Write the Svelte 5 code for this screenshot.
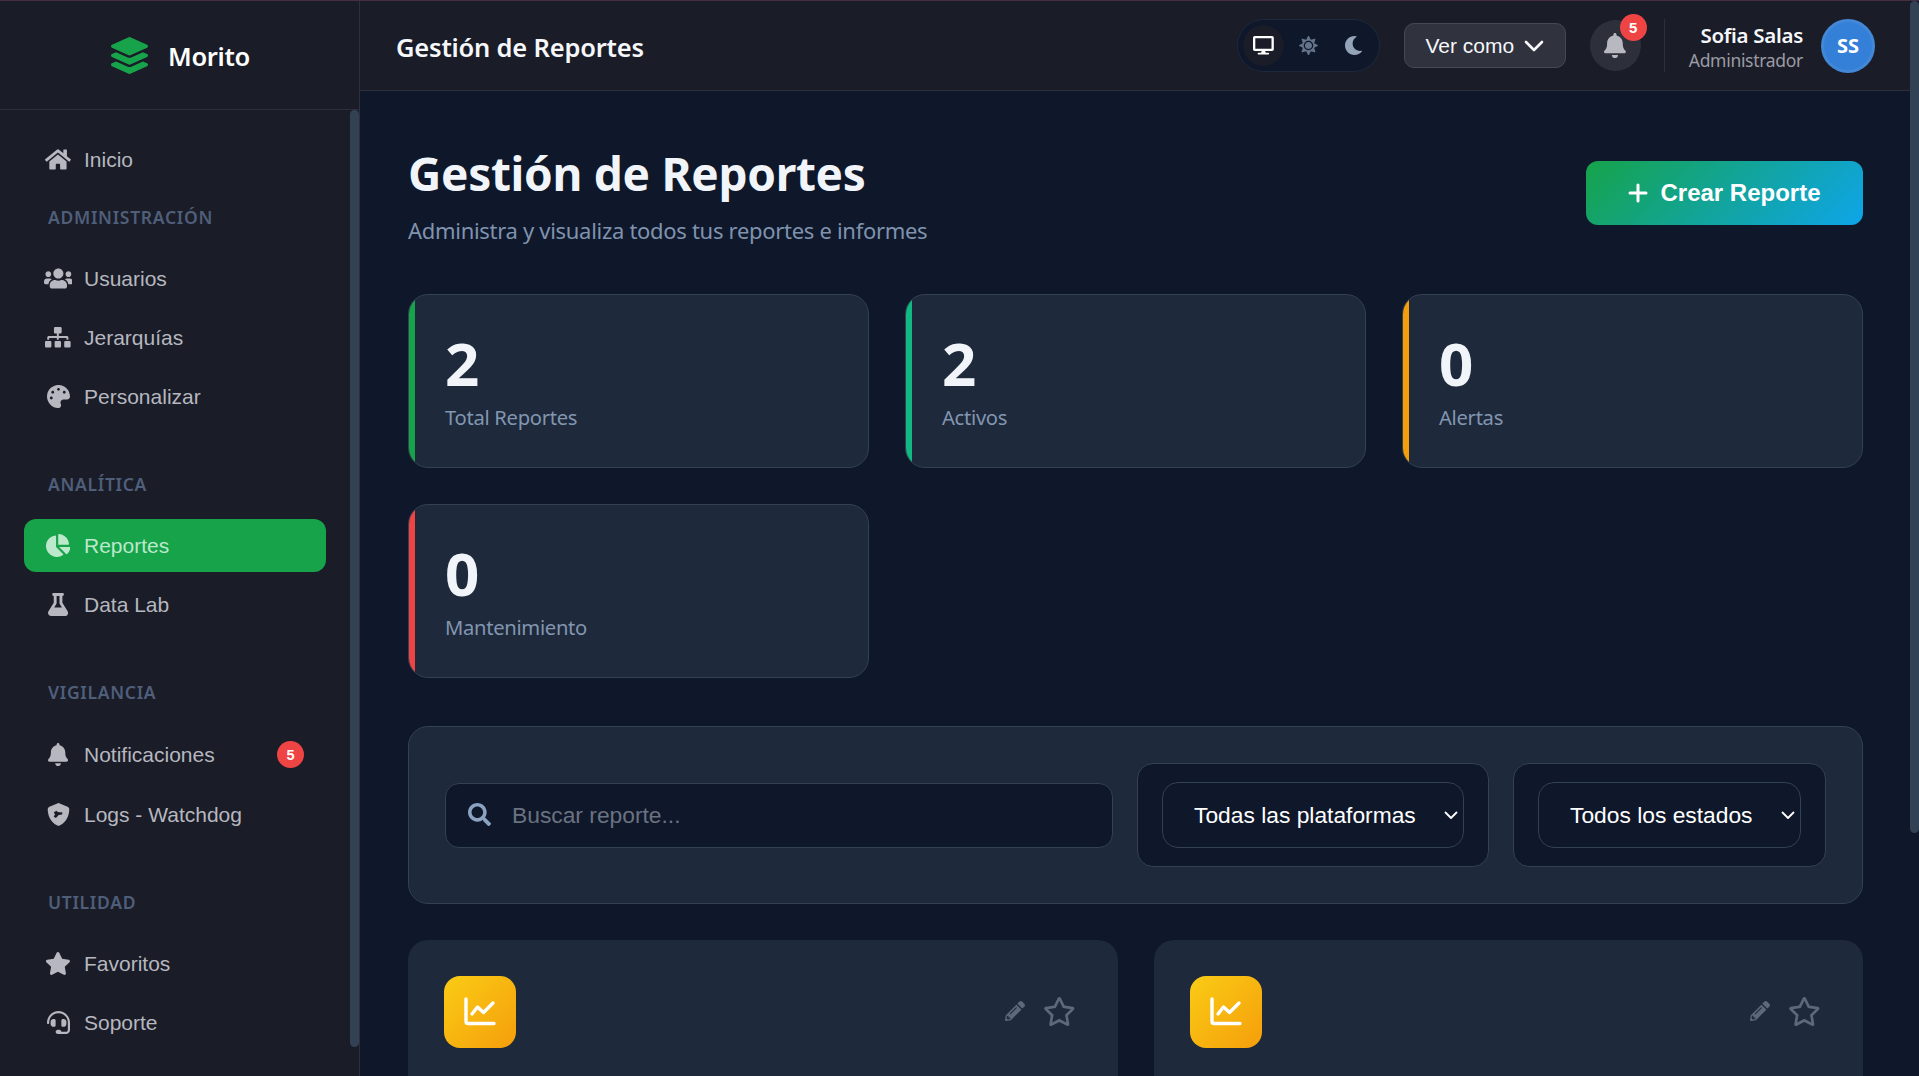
<script>
  const icons = {
    home: [576, 'M280.37 148.26L96 300.11V464a16 16 0 0 0 16 16l112.06-.29a16 16 0 0 0 15.92-16V368a16 16 0 0 1 16-16h64a16 16 0 0 1 16 16v95.64a16 16 0 0 0 16 16.05L464 480a16 16 0 0 0 16-16V300L295.67 148.26a12.19 12.19 0 0 0-15.3 0zM571.6 251.47L488 182.56V44.05a12 12 0 0 0-12-12h-56a12 12 0 0 0-12 12v72.61L318.47 43a48 48 0 0 0-61 0L4.34 251.47a12 12 0 0 0-1.6 16.9l25.5 31A12 12 0 0 0 45.15 301l235.22-193.74a12.19 12.19 0 0 1 15.3 0L530.9 301a12 12 0 0 0 16.9-1.6l25.5-31a12 12 0 0 0-1.7-16.93z'],
    users: [640, 'M96 224c35.3 0 64-28.7 64-64s-28.7-64-64-64-64 28.7-64 64 28.7 64 64 64zm448 0c35.3 0 64-28.7 64-64s-28.7-64-64-64-64 28.7-64 64 28.7 64 64 64zm32 32h-64c-17.6 0-33.5 7.1-45.1 18.6 40.3 22.1 68.9 62 75.1 109.4h66c17.7 0 32-14.3 32-32v-32c0-35.3-28.7-64-64-64zm-256 0c61.9 0 112-50.1 112-112S381.9 32 320 32 208 82.1 208 144s50.1 112 112 112zm76.8 32h-8.3c-20.8 10-43.9 16-68.5 16s-47.6-6-68.5-16h-8.3C179.6 288 128 339.6 128 403.2V432c0 26.5 21.5 48 48 48h288c26.5 0 48-21.5 48-48v-28.8c0-63.6-51.6-115.2-115.2-115.2zm-223.7-13.4C161.5 263.1 145.6 256 128 256H64c-35.3 0-64 28.7-64 64v32c0 17.7 14.3 32 32 32h65.9c6.3-47.4 34.9-87.3 75.2-109.4z'],
    sitemap: [640, 'M128 352H32c-17.67 0-32 14.33-32 32v96c0 17.67 14.33 32 32 32h96c17.67 0 32-14.33 32-32v-96c0-17.67-14.33-32-32-32zm-24-80h192v48h48v-48h192v48h48v-57.59c0-21.17-17.23-38.41-38.41-38.41H344v-64h40c17.67 0 32-14.33 32-32V32c0-17.67-14.33-32-32-32H256c-17.67 0-32 14.33-32 32v96c0 17.67 14.33 32 32 32h40v64H94.41C73.23 224 56 241.23 56 262.41V320h48v-48zm264 80h-96c-17.67 0-32 14.33-32 32v96c0 17.67 14.33 32 32 32h96c17.67 0 32-14.33 32-32v-96c0-17.67-14.33-32-32-32zm240 0h-96c-17.67 0-32 14.33-32 32v96c0 17.67 14.33 32 32 32h96c17.67 0 32-14.33 32-32v-96c0-17.67-14.33-32-32-32z'],
    palette: [512, 'M204.3 5C104.9 24.4 24.8 104.3 5.2 203.4c-37 187 131.7 326.4 258.8 306.7 41.2-6.4 61.4-54.6 42.5-91.7-23.1-45.4 9.9-98.4 60.9-98.4h79.7c35.8 0 64.8-29.6 64.9-65.3C511.5 97.1 368.1-26.9 204.3 5zM96 320c-17.7 0-32-14.3-32-32s14.3-32 32-32 32 14.3 32 32-14.3 32-32 32zm32-128c-17.7 0-32-14.3-32-32s14.3-32 32-32 32 14.3 32 32-14.3 32-32 32zm128-64c-17.7 0-32-14.3-32-32s14.3-32 32-32 32 14.3 32 32-14.3 32-32 32zm128 64c-17.7 0-32-14.3-32-32s14.3-32 32-32 32 14.3 32 32-14.3 32-32 32z'],
    pie: [544, 'M527.79 288H290.5l158.03 158.03c6.04 6.04 15.98 6.53 22.19.68 38.7-36.46 65.32-85.61 73.13-140.86 1.34-9.46-6.51-17.85-16.06-17.85zm-15.83-64.8C503.72 103.74 408.26 8.28 288.8.04 279.68-.59 272 7.1 272 16.24V240h223.77c9.14 0 16.82-7.68 16.19-16.8zM224 288V50.71c0-9.55-8.39-17.4-17.84-16.06C86.99 51.49-4.1 155.6.14 280.37 4.5 408.51 114.83 513.59 243.03 511.98c50.4-.63 96.97-16.87 135.26-44.03 7.9-5.6 8.42-17.23 1.57-24.08L224 288z'],
    flask: [448, 'M437.2 403.5L320 215V64h8c13.3 0 24-10.7 24-24V24c0-13.3-10.7-24-24-24H120c-13.3 0-24 10.7-24 24v16c0 13.3 10.7 24 24 24h8v151L10.8 403.5C-18.5 450.6 15.3 512 70.9 512h306.2c55.7 0 89.4-61.5 60.1-108.5zM137.9 320l48.2-77.6c3.7-5.2 5.8-11.6 5.8-18.4V64h64v160c0 6.9 2.2 13.2 5.8 18.4l48.2 77.6h-172z'],
    bell: [448, 'M224 512c35.32 0 63.97-28.65 63.97-64H160.03c0 35.35 28.65 64 63.97 64zm215.39-149.71c-19.32-20.76-55.47-51.99-55.47-154.29 0-77.7-54.48-139.9-127.94-155.16V32c0-17.67-14.32-32-31.98-32s-31.98 14.33-31.98 32v20.84C118.56 68.1 64.08 130.3 64.08 208c0 102.3-36.15 133.53-55.47 154.29-6 6.45-8.66 14.16-8.61 21.71.11 16.4 12.98 32 32.1 32h383.8c19.12 0 32-15.6 32.1-32 .05-7.55-2.61-15.27-8.61-21.71z'],
    shield: [512, 'M256 0c4.6 0 9.2 1 13.4 2.9L457.7 82.8c22 9.3 38.4 31 38.3 57.2c-.5 99.2-41.3 280.7-213.6 363.2c-16.7 8-36.1 8-52.8 0C57.3 420.7 16.5 239.2 16 140c-.1-26.2 16.3-47.9 38.3-57.2L242.7 2.9C246.8 1 251.4 0 256 0zM150 205L215 172L238 198L345 212L335 256L262 266L198 335L150 305L178 250Z'],
    star: [576, 'M259.3 17.8L194 150.2 47.9 171.5c-26.2 3.8-36.7 36.1-17.7 54.6l105.7 103-25 145.5c-4.5 26.3 23.2 46 46.4 33.7L288 439.6l130.7 68.7c23.2 12.2 50.9-7.4 46.4-33.7l-25-145.5 105.7-103c19-18.5 8.5-50.8-17.7-54.6L382 150.2 316.7 17.8c-11.7-23.6-45.6-23.9-57.4 0z'],
    starO: [576, 'M528.1 171.5L382 150.2 316.7 17.8c-11.7-23.6-45.6-23.9-57.4 0L194 150.2 47.9 171.5c-26.2 3.8-36.7 36.1-17.7 54.6l105.7 103-25 145.5c-4.5 26.3 23.2 46 46.4 33.7L288 439.6l130.7 68.7c23.2 12.2 50.9-7.4 46.4-33.7l-25-145.5 105.7-103c19-18.5 8.5-50.8-17.7-54.6zM388.6 312.3l23.7 138.4L288 385.4l-124.3 65.3 23.7-138.4-100.6-98 139-20.2 62.2-126 62.2 126 139 20.2-100.6 98z'],
    headset: [512, 'M192 208c0-17.67-14.33-32-32-32h-16c-35.35 0-64 28.65-64 64v48c0 35.35 28.65 64 64 64h16c17.67 0 32-14.33 32-32V208zm176 144c35.35 0 64-28.65 64-64v-48c0-35.35-28.65-64-64-64h-16c-17.67 0-32 14.33-32 32v112c0 17.67 14.33 32 32 32h16zM256 0C113.18 0 4.58 118.83 0 256v16c0 8.84 7.16 16 16 16h16c8.84 0 16-7.16 16-16v-16c0-114.69 93.31-208 208-208s208 93.31 208 208h-.12c.08 2.43.12 165.72.12 165.72 0 23.35-18.93 42.28-42.28 42.28H320c0-26.51-21.49-48-48-48h-32c-26.51 0-48 21.49-48 48s21.49 48 48 48h181.72c49.86 0 90.28-40.42 90.28-90.28V256C507.42 118.83 398.82 0 256 0z'],
    desktop: [576, 'M528 0H48C21.5 0 0 21.5 0 48v320c0 26.5 21.5 48 48 48h192l-16 48h-72c-13.3 0-24 10.7-24 24s10.7 24 24 24h272c13.3 0 24-10.7 24-24s-10.7-24-24-24h-72l-16-48h192c26.5 0 48-21.5 48-48V48c0-26.5-21.5-48-48-48zm-16 352H64V64h448v288z'],
    sun: [512, 'M256 160c-52.9 0-96 43.1-96 96s43.1 96 96 96 96-43.1 96-96-43.1-96-96-96zm246.4 80.5l-94.7-47.3 33.5-100.4c4.5-13.6-8.4-26.5-21.9-21.9l-100.4 33.5-47.4-94.8c-6.4-12.8-24.6-12.8-31 0l-47.3 94.7L92.7 70.8c-13.6-4.5-26.5 8.4-21.9 21.9l33.5 100.4-94.7 47.4c-12.8 6.4-12.8 24.6 0 31l94.7 47.3-33.5 100.5c-4.5 13.6 8.4 26.5 21.9 21.9l100.4-33.5 47.3 94.7c6.4 12.8 24.6 12.8 31 0l47.3-94.7 100.4 33.5c13.6 4.5 26.5-8.4 21.9-21.9l-33.5-100.4 94.7-47.3c13-6.5 13-24.7.2-31.1zm-155.9 106c-49.9 49.9-131.1 49.9-181 0-49.9-49.9-49.9-131.1 0-181 49.9-49.9 131.1-49.9 181 0 49.9 49.9 49.9 131.1 0 181z'],
    moon: [512, 'M283.211 512c78.962 0 151.079-35.925 198.857-94.792 7.068-8.708-.639-21.43-11.562-19.35-124.203 23.654-238.262-71.576-238.262-196.954 0-72.222 38.662-138.635 101.498-174.394 9.686-5.512 7.25-20.197-3.756-22.23A258.156 258.156 0 0 0 283.211 0c-141.309 0-256 114.511-256 256 0 141.309 114.511 256 256 256z'],
    search: [512, 'M505 442.7L405.3 343c-4.5-4.5-10.6-7-17-7H372c27.6-35.3 44-79.7 44-128C416 93.1 322.9 0 208 0S0 93.1 0 208s93.1 208 208 208c48.3 0 92.7-16.4 128-44v16.3c0 6.4 2.5 12.5 7 17l99.7 99.7c9.4 9.4 24.6 9.4 33.9 0l28.3-28.3c9.4-9.4 9.4-24.6.1-34zM208 336c-70.7 0-128-57.2-128-128 0-70.7 57.2-128 128-128 70.7 0 128 57.2 128 128 0 70.7-57.2 128-128 128z'],
    layers: [512, 'M12.41 148.02l232.94 105.67c6.8 3.09 14.49 3.09 21.29 0l232.94-105.67c16.55-7.51 16.55-32.52 0-40.03L266.65 2.31a25.607 25.607 0 0 0-21.29 0L12.41 107.98c-16.55 7.51-16.55 32.53 0 40.04zm487.18 88.28l-58.09-26.33-161.64 73.27c-7.56 3.43-15.59 5.17-23.86 5.17s-16.29-1.74-23.86-5.17L70.51 209.97l-58.1 26.33c-16.55 7.5-16.55 32.5 0 40l232.94 105.59c6.8 3.08 14.49 3.08 21.29 0L499.59 276.3c16.55-7.5 16.55-32.5 0-40zm0 127.8l-57.87-26.23-161.86 73.37c-7.56 3.43-15.59 5.17-23.86 5.17s-16.29-1.74-23.86-5.17L70.29 337.87 12.41 364.1c-16.55 7.5-16.55 32.5 0 40l232.94 105.59c6.8 3.08 14.49 3.08 21.29 0L499.59 404.1c16.55-7.5 16.55-32.5 0-40z'],
    pencil: [512, 'M497.9 142.1l-46.1 46.1c-4.7 4.7-12.3 4.7-17 0l-111-111c-4.7-4.7-4.7-12.3 0-17l46.1-46.1c18.7-18.7 49.1-18.7 67.9 0l60.1 60.1c18.8 18.7 18.8 49.1 0 67.9zM284.2 99.8L21.6 362.4.4 483.9c-2.9 16.4 11.4 30.6 27.8 27.8l121.5-21.3 262.6-262.6c4.7-4.7 4.7-12.3 0-17l-111-111c-4.8-4.7-12.4-4.7-17.1 0zM124.1 339.9c-5.5-5.5-5.5-14.3 0-19.8l154-154c5.5-5.5 14.3-5.5 19.8 0s5.5 14.3 0 19.8l-154 154c-5.5 5.5-14.3 5.5-19.8 0zM88 424h48v36.3l-64.5 11.3-31.1-31.1L51.7 376H88v48z']
  };

  const sections = [
    { title: 'Administración', items: [
      { label: 'Usuarios', icon: 'users' },
      { label: 'Jerarquías', icon: 'sitemap', size: 20.5 },
      { label: 'Personalizar', icon: 'palette' }
    ] },
    { title: 'Analítica', items: [
      { label: 'Reportes', icon: 'pie', active: true },
      { label: 'Data Lab', icon: 'flask' }
    ] },
    { title: 'Vigilancia', items: [
      { label: 'Notificaciones', icon: 'bell', badge: 5 },
      { label: 'Logs - Watchdog', icon: 'shield' }
    ] },
    { title: 'Utilidad', items: [
      { label: 'Favoritos', icon: 'star' },
      { label: 'Soporte', icon: 'headset' }
    ] }
  ];

  const stats = [
    { value: 2, label: 'Total Reportes', color: '#16a34a' },
    { value: 2, label: 'Activos', color: '#10b981' },
    { value: 0, label: 'Alertas', color: '#f59e0b' },
    { value: 0, label: 'Mantenimiento', color: '#ef4444' }
  ];

  const filters = [
    { cls: 'platform', options: ['Todas las plataformas', 'Web', 'Móvil'] },
    { cls: 'status', options: ['Todos los estados', 'Activo', 'Alerta'] }
  ];
</script>

{#snippet icon(name, size)}
  <svg class="ic" width={size * icons[name][0] / 512} height={size} viewBox="0 0 {icons[name][0]} 512" fill="currentColor" fill-rule="evenodd" aria-hidden="true">
    <path d={icons[name][1]} />
  </svg>
{/snippet}

{#snippet navItem(item)}
  <a class="item" class:active={item.active} class:tall={item.badge} href="#top">
    <span class="item-ic">{@render icon(item.icon, item.size ?? 23)}</span>
    <span class="item-label">{item.label}</span>
    {#if item.badge}<span class="nav-badge">{item.badge}</span>{/if}
  </a>
{/snippet}

<div class="app">
  <aside class="sidebar">
    <div class="brand">
      <span class="brand-ic">{@render icon('layers', 37)}</span>
      <span class="brand-name">Morito</span>
    </div>
    <div class="side-body">
      <nav class="nav">
        {@render navItem({ label: 'Inicio', icon: 'home' })}
        {#each sections as section, i}
          <div class="section" class:first={i === 0}>
            <div class="section-title">{section.title}</div>
            {#each section.items as item}
              {@render navItem(item)}
            {/each}
          </div>
        {/each}
      </nav>
      <div class="gutter"><div class="thumb side-thumb"></div></div>
    </div>
  </aside>

  <main class="main">
    <header class="topbar">
      <div class="topbar-title">Gestión de Reportes</div>
      <div class="theme">
        <button class="theme-btn on">{@render icon('desktop', 18.5)}</button>
        <button class="theme-btn sun">{@render icon('sun', 19)}</button>
        <button class="theme-btn moon">{@render icon('moon', 19)}</button>
      </div>
      <button class="viewas">
        Ver como
        <svg width="20" height="12" viewBox="0 0 20 12" fill="none" stroke="currentColor" stroke-width="2.6" stroke-linecap="round" stroke-linejoin="round"><path d="M2 2l8 8 8-8" /></svg>
      </button>
      <button class="bell">
        {@render icon('bell', 25)}
        <span class="bell-badge">5</span>
      </button>
      <div class="divider"></div>
      <div class="user">
        <div class="user-name">Sofia Salas</div>
        <div class="user-role">Administrador</div>
      </div>
      <div class="avatar">SS</div>
    </header>

    <div class="content">
      <div class="page-head">
        <div>
          <h1>Gestión de Reportes</h1>
          <p>Administra y visualiza todos tus reportes e informes</p>
        </div>
        <button class="create">
          <svg width="20" height="20" viewBox="0 0 20 20" fill="none" stroke="currentColor" stroke-width="3" stroke-linecap="round"><path d="M10 2v16M2 10h16" /></svg>
          Crear Reporte
        </button>
      </div>

      <div class="stats">
        {#each stats as s}
          <div class="stat" style="--accent: {s.color}">
            <div class="stat-value">{s.value}</div>
            <div class="stat-label">{s.label}</div>
          </div>
        {/each}
      </div>

      <div class="filters">
        <div class="search">
          <span class="search-ic">{@render icon('search', 23)}</span>
          <input type="text" placeholder="Buscar reporte..." />
        </div>
        {#each filters as f}
          <div class="select-wrap {f.cls}">
            <select>
              {#each f.options as opt}
                <option>{opt}</option>
              {/each}
            </select>
            <svg class="caret" width="14" height="9" viewBox="0 0 14 9" fill="none" stroke="#fff" stroke-width="1.8" stroke-linecap="round" stroke-linejoin="round"><path d="M1.5 1.5L7 7l5.5-5.5" /></svg>
          </div>
        {/each}
      </div>

      <div class="reports">
        {#each [1, 2] as r}
          <div class="report">
            <div class="report-top">
              <div class="report-ic">
                <svg width="32" height="30" viewBox="0 0 32 30" fill="none" stroke="#fff" stroke-width="3.4" stroke-linecap="round" stroke-linejoin="round">
                  <path d="M2 2v22.5a2 2 0 0 0 2 2h26" />
                  <path d="M8 17l5.5-7 6 5.5L29 6" />
                </svg>
              </div>
              <div class="report-actions">
                <span class="edit">{@render icon('pencil', 20)}</span>
                <span class="fav">{@render icon('starO', 29)}</span>
              </div>
            </div>
          </div>
        {/each}
      </div>
    </div>
  </main>
  <div class="gutter"><div class="thumb main-thumb"></div></div>
</div>

<style>
  :global(body) {
    background: #0f172a;
    overflow: hidden;
  }

  .app {
    display: flex;
    height: 100vh;
    box-sizing: border-box;
    border-top: 1px solid #46303f;
    overflow: hidden;
    font-family: "Liberation Sans", Arial, sans-serif;
    color: #f1f5f9;
  }

  .ic {
    display: block;
    flex: none;
  }

  /* sidebar */
  .sidebar {
    width: 360px;
    flex: none;
    display: flex;
    flex-direction: column;
    background: #1a1c28;
    border-right: 1px solid #2d2f3b;
    box-sizing: border-box;
  }

  .brand {
    height: 109px;
    flex: none;
    box-sizing: border-box;
    border-bottom: 1px solid #2d2f3b;
    display: flex;
    align-items: center;
    justify-content: center;
    gap: 20px;
    padding-left: 2px;
  }

  .brand-ic {
    color: #16a34a;
  }

  .brand-name {
    font-family: "Noto Sans", sans-serif;
    font-weight: 600;
    font-size: 25.5px;
    letter-spacing: -0.3px;
    color: #fff;
    padding-top: 2px;
  }

  .side-body {
    flex: 1;
    min-height: 0;
    display: flex;
  }

  .nav {
    flex: 1;
    min-width: 0;
    overflow: hidden;
    padding-top: 23px;
  }

  .gutter {
    width: 9px;
    flex: none;
  }

  .thumb {
    background: #334155;
    border-radius: 5px;
  }

  .side-thumb {
    height: 937px;
  }

  .main-thumb {
    height: 832px;
  }

  .item {
    display: flex;
    align-items: center;
    height: 53px;
    margin: 0 24px 6px;
    padding: 0 22px 0 21px;
    border-radius: 12px;
    color: #b6b7bf;
    font-size: 21px;
    text-decoration: none;
  }

  .item.tall {
    height: 55px;
  }

  .item.active {
    background: #16a34a;
    color: #bce8cc;
  }

  .item-ic {
    width: 26px;
    flex: none;
    display: flex;
    justify-content: center;
    margin-right: 13px;
  }

  .item-label {
    flex: 1;
  }

  .nav-badge {
    width: 27px;
    height: 27px;
    border-radius: 50%;
    background: #ef4444;
    color: #fff;
    font-size: 14.5px;
    font-weight: 700;
    display: flex;
    align-items: center;
    justify-content: center;
  }

  .section {
    margin-top: 48.5px;
  }

  .section.first {
    margin-top: 18.5px;
  }

  .section-title {
    margin: 0 48px 23.5px;
    line-height: 24px;
    font-family: "Noto Sans", sans-serif;
    font-size: 17.5px;
    font-weight: 600;
    letter-spacing: 0.7px;
    text-transform: uppercase;
    color: #4f5f7a;
  }

  /* main */
  .main {
    flex: 1;
    min-width: 0;
    overflow: hidden;
  }

  .topbar {
    height: 90px;
    box-sizing: border-box;
    border-bottom: 1px solid #2d2f3b;
    background: #1a1c28;
    display: flex;
    align-items: center;
    padding: 0 35px 0 36px;
  }

  .topbar-title {
    flex: 1;
    font-family: "Noto Sans", sans-serif;
    font-weight: 600;
    font-size: 25.5px;
    letter-spacing: -0.2px;
    color: #f5f7fa;
    padding-top: 2px;
  }

  button {
    font-family: inherit;
    border: none;
    background: none;
    color: inherit;
    padding: 0;
  }

  .theme {
    display: flex;
    align-items: center;
    gap: 4px;
    height: 53px;
    box-sizing: border-box;
    padding: 0 5px;
    border: 1px solid #1e293b;
    border-radius: 27px;
    background: #0f172a;
    margin-right: 24px;
  }

  .theme-btn {
    width: 41px;
    height: 41px;
    border-radius: 50%;
    display: flex;
    align-items: center;
    justify-content: center;
  }

  .theme-btn.on {
    background: #1a1c28;
    color: #fff;
  }

  .theme-btn.sun {
    color: #64748b;
  }

  .theme-btn.moon {
    color: #94a3b8;
  }

  .viewas {
    width: 162px;
    height: 45px;
    box-sizing: border-box;
    display: flex;
    align-items: center;
    justify-content: center;
    gap: 10px;
    background: #30323e;
    border: 1px solid #464856;
    border-radius: 10px;
    color: #f5f7fa;
    font-size: 21px;
    margin-right: 24px;
  }

  .bell {
    position: relative;
    width: 51px;
    height: 51px;
    border-radius: 50%;
    background: #2d2f3a;
    color: #b8b9c0;
    display: flex;
    align-items: center;
    justify-content: center;
    margin-right: 23px;
  }

  .bell-badge {
    position: absolute;
    top: -6px;
    right: -6px;
    width: 27px;
    height: 27px;
    border-radius: 50%;
    background: #ef4444;
    color: #fff;
    font-size: 15px;
    font-weight: 700;
    display: flex;
    align-items: center;
    justify-content: center;
  }

  .divider {
    width: 1px;
    height: 53px;
    background: #2d2f3b;
    margin-right: 24px;
  }

  .user {
    text-align: right;
    margin-right: 18px;
    padding-top: 2px;
  }

  .user-name {
    font-family: "Noto Sans", sans-serif;
    font-weight: 600;
    font-size: 20.5px;
    line-height: 26px;
    letter-spacing: -0.3px;
    color: #f5f7fa;
  }

  .user-role {
    font-family: "Noto Sans", sans-serif;
    font-size: 17.5px;
    line-height: 24px;
    letter-spacing: -0.3px;
    color: #9a9ba3;
  }

  .avatar {
    width: 54px;
    height: 54px;
    box-sizing: border-box;
    border-radius: 50%;
    background: #3480d8;
    border: 3px solid #4388d6;
    display: flex;
    align-items: center;
    justify-content: center;
    font-family: "Noto Sans", sans-serif;
    font-weight: 700;
    font-size: 20px;
    color: #fff;
  }

  .content {
    padding: 50px 47px 0 48px;
  }

  .page-head {
    display: flex;
    align-items: center;
    justify-content: space-between;
    margin-bottom: 49px;
  }

  h1 {
    margin: 0 0 10px;
    font-family: "Noto Sans", sans-serif;
    font-size: 46px;
    line-height: 64px;
    font-weight: 700;
    letter-spacing: -0.3px;
    color: #f1f5f9;
  }

  .page-head p {
    margin: 0;
    font-family: "Noto Sans", sans-serif;
    font-size: 22px;
    line-height: 30px;
    letter-spacing: -0.3px;
    color: #7f93ae;
  }

  .create {
    width: 277px;
    height: 64px;
    display: flex;
    align-items: center;
    justify-content: center;
    gap: 12px;
    border-radius: 12px;
    background: linear-gradient(135deg, #16a34a, #0ea5e9);
    color: #fff;
    font-size: 24px;
    font-weight: 700;
    margin-top: -1px;
  }

  .stats {
    display: grid;
    grid-template-columns: repeat(3, 1fr);
    gap: 36px;
    margin-bottom: 48px;
  }

  .stat {
    position: relative;
    overflow: hidden;
    box-sizing: border-box;
    height: 174px;
    padding: 35px 36px;
    background: #1e293b;
    border: 1px solid #334155;
    border-radius: 20px;
  }

  .stat::before {
    content: "";
    position: absolute;
    left: 0;
    top: 0;
    bottom: 0;
    width: 6px;
    background: var(--accent);
  }

  .stat-value {
    font-family: "Noto Sans", sans-serif;
    font-weight: 700;
    font-size: 60px;
    line-height: 66px;
    color: #f1f5f9;
  }

  .stat-label {
    margin-top: 7px;
    font-family: "Noto Sans", sans-serif;
    font-size: 20.2px;
    line-height: 28px;
    letter-spacing: -0.3px;
    color: #8296b0;
  }

  .filters {
    display: flex;
    align-items: center;
    gap: 24px;
    padding: 36px;
    background: #1e293b;
    border: 1px solid #334155;
    border-radius: 20px;
    margin-bottom: 36px;
  }

  .search {
    flex: 1;
    min-width: 0;
    position: relative;
  }

  .search-ic {
    position: absolute;
    left: 23px;
    top: 20px;
    color: #8ba3c0;
  }

  .search input {
    width: 100%;
    height: 65px;
    box-sizing: border-box;
    padding: 0 20px 0 66px;
    background: #0f172a;
    border: 1px solid #334155;
    border-radius: 14px;
    color: #fff;
    font-family: inherit;
    font-size: 22.8px;
    outline: none;
  }

  .search input::placeholder {
    color: #6b7280;
  }

  .select-wrap {
    position: relative;
    padding: 18px 24px;
    background: #0f172a;
    border: 1px solid #334155;
    border-radius: 16px;
  }

  .platform select {
    width: 302px;
  }

  .status select {
    width: 263px;
  }

  select {
    appearance: none;
    display: block;
    height: 66px;
    padding: 0 30px 0 31px;
    background: #0f172a;
    border: 1px solid #334155;
    border-radius: 16px;
    color: #fff;
    font-family: inherit;
    font-size: 22.8px;
    outline: none;
  }

  .caret {
    position: absolute;
    right: 30px;
    top: 47px;
    pointer-events: none;
  }

  .reports {
    display: grid;
    grid-template-columns: 1fr 1fr;
    gap: 36px;
  }

  .report {
    height: 449px;
    box-sizing: border-box;
    padding: 36px;
    background: #1e293b;
    border-radius: 20px;
  }

  .report-top {
    display: flex;
    align-items: center;
    justify-content: space-between;
  }

  .report-ic {
    width: 72px;
    height: 72px;
    border-radius: 16px;
    background: linear-gradient(135deg, #facc15, #f59e0b);
    display: flex;
    align-items: center;
    justify-content: center;
  }

  .report-actions {
    display: flex;
    align-items: center;
    gap: 18px;
    margin: 0 6px 2px 0;
    color: #5e6879;
  }
</style>
